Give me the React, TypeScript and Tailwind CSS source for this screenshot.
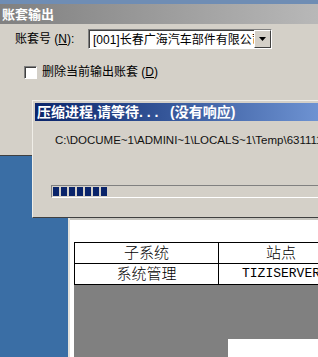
export default function App() {
  const cjk = { fontFamily: '"Liberation Sans", "Noto Sans CJK SC", sans-serif' };
  const serif = { fontFamily: '"Liberation Mono", "Noto Sans CJK SC", monospace' };

  return (
    <div className="relative w-[318px] h-[357px] overflow-hidden bg-[#3a6ea5]" style={cjk}>
      {/* main dialog: 账套输出 */}
      <div className="absolute left-0 top-0 w-full h-[156px] flex flex-col bg-[#d4d0c8] border-b border-[#404040]">
        <div className="h-[4px] bg-[#6f8db4]" />
        <div className="h-[20px] flex items-center pl-[2px] bg-gradient-to-r from-[#808080] to-[#b8b8b8]">
          <span className="text-[13px] font-bold text-white leading-none">账套输出</span>
        </div>
        <div className="flex items-center mt-[5px] pl-[15px] h-[20px]">
          <span className="text-[12px] text-black w-[73px] whitespace-nowrap">账套号 (<span className="underline">N</span>):</span>
          <div className="flex items-center w-[184px] h-[20px] bg-white border-t border-l border-[#808080] border-r border-b border-r-white border-b-white">
            <div className="flex-1 flex items-center h-full border-t border-l border-[#404040] pl-[3px] overflow-hidden whitespace-nowrap">
              <span className="text-[12px] text-black">[001]长春广海汽车部件有限公司</span>
            </div>
            <div className="w-[17px] h-[18px] flex items-center justify-center bg-[#d4d0c8] border-t border-l border-white border-r border-b border-r-[#404040] border-b-[#404040] shrink-0">
              <svg width="7" height="4" viewBox="0 0 7 4">
                <path d="M0 0h7L3.5 4z" fill="#000" />
              </svg>
            </div>
          </div>
        </div>
        <div className="flex items-center mt-[14px] pl-[24px]">
          <div className="w-[13px] h-[13px] bg-white border-t border-l border-[#808080] border-r border-b border-r-white border-b-white">
            <div className="w-full h-full border-t border-l border-[#404040]" />
          </div>
          <span className="ml-[5px] text-[12px] text-black whitespace-nowrap">删除当前输出账套 (<span className="underline">D</span>)</span>
        </div>
      </div>

      {/* lower window with table */}
      <div className="absolute left-[68px] top-[217px] right-0 bottom-0 flex flex-col bg-[#d4d0c8] border-l-2 border-[#e4e2dc]">
        <div className="h-[3px] bg-[#c8c6c0]" />
        <div className="flex-1 flex flex-col bg-white pl-[4px] pt-[22px]">
          <div className="w-[270px] border border-black bg-white">
            <div className="flex h-[21px] border-b border-black">
              <div className="w-[144px] border-r border-black flex items-center justify-center text-[15px] font-light text-black">子系统</div>
              <div className="flex-1 flex items-center justify-center text-[15px] font-light text-black">站点</div>
            </div>
            <div className="flex h-[20px]">
              <div className="w-[144px] border-r border-black flex items-center justify-center text-[15px] font-light text-black">系统管理</div>
              <div className="flex-1 flex items-center justify-center text-[13px] text-black" style={serif}>TIZISERVER</div>
            </div>
          </div>
          <div className="flex-1 flex flex-col justify-end bg-[#808080]">
            <div className="ml-[154px] h-[18px] bg-white" />
          </div>
        </div>
      </div>

      {/* progress dialog */}
      <div className="absolute left-[32px] top-[100px] w-[300px] h-[118px] flex flex-col bg-[#d4d0c8] border-t border-l border-[#f0eee8] border-r border-b border-b-[#404040] border-r-[#404040] p-[2px]">
        <div className="h-[18px] flex items-center pl-[2px] bg-gradient-to-r from-[#0a246a] to-[#7297d6]">
          <span className="text-[14px] font-bold text-white leading-none whitespace-nowrap">压缩进程,请等待. . .&nbsp;&nbsp; (没有响应)</span>
        </div>
        <div className="pl-[20px] mt-[11px] text-[11.5px] leading-[16px] text-[#111] whitespace-nowrap">C:\DOCUME~1\ADMINI~1\LOCALS~1\Temp\631111\zt001.cab</div>
        <div className="ml-[16px] mt-[37px] h-[13px] w-[280px] flex items-center gap-[2px] pl-[1px] border-t border-l border-[#808080] border-b border-b-white">
          {[0, 1, 2, 3, 4, 5, 6].map((i) => (
            <div key={i} className="w-[6px] h-[9px] bg-[#0a246a]" />
          ))}
        </div>
      </div>
    </div>
  );
}
